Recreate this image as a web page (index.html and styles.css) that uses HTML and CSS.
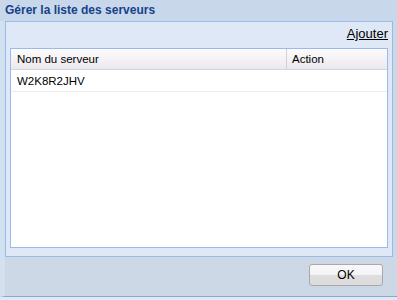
FILE: index.html
```html
<!DOCTYPE html>
<html lang="fr">
<head>
  <meta charset="UTF-8" />
  <title>Gérer la liste des serveurs</title>
  <link rel="stylesheet" href="styles.css">
</head>
<body>
  <div class="window">
    <div class="title">Gérer la liste des serveurs</div>

    <div class="panel">
      <div class="toolbar">
        <a href="#" class="add-link">Ajouter</a>
      </div>

      <div class="grid">
        <div class="grid-head">
          <div class="col-name">Nom du serveur</div>
          <div class="col-action">Action</div>
        </div>
        <div class="grid-row">
          <div class="col-name">W2K8R2JHV</div>
          <div class="col-action"></div>
        </div>
      </div>
    </div>

    <div class="footer">
      <button class="ok-btn">OK</button>
    </div>
  </div>
</body>
</html>
```

FILE: styles.css
```css
body {
  margin: 0;
  font-family: "Liberation Sans", Arial, sans-serif;
  font-size: 11.5px;
  color: #000;
  background: #dfe8f6;
}

.window {
  width: 397px;
  height: 297px;
  box-sizing: border-box;
  background: #cdd8e7;
  border-left: 5px solid #d3e0ef;
  border-bottom: 1px solid #8fa8c8;
  display: flex;
  flex-direction: column;
}

.title {
  height: 21px;
  line-height: 21px;
  margin-left: -5px;
  padding-left: 5px;
  background: #c8d8ea;
  color: #15428b;
  font-weight: bold;
  font-size: 12px;
}

.panel {
  width: 388px;
  height: 236px;
  box-sizing: border-box;
  border: 1px solid #99bbe8;
  background: #dfe8f6;
  padding: 0 4px 8px 4px;
  display: flex;
  flex-direction: column;
}

.toolbar {
  height: 26px;
  display: flex;
  justify-content: flex-end;
  align-items: flex-start;
}

.add-link {
  margin-top: 4px;
  font-size: 13px;
  color: #000;
  text-decoration: underline;
}

.grid {
  flex: 1;
  border: 1px solid #99bbe8;
  background: #fff;
}

.grid-head, .grid-row {
  display: flex;
}

.grid-head {
  height: 21px;
  line-height: 21px;
  background: linear-gradient(#fdfbfd, #ebe9ed);
  border-bottom: 1px solid #d6d6d6;
  box-sizing: border-box;
}

.grid-row {
  height: 22px;
  line-height: 23px;
  border-bottom: 1px solid #ededed;
  box-sizing: border-box;
}

.col-name {
  width: 275px;
  padding-left: 6px;
  box-sizing: border-box;
}

.grid-head .col-name {
  border-right: 1px solid #d2d2d2;
  width: 276px;
}

.col-action {
  flex: 1;
  padding-left: 5px;
}

.footer {
  flex: 1;
  display: flex;
  justify-content: flex-end;
  align-items: flex-start;
  padding: 7px 14px 0 0;
}

.ok-btn {
  width: 74px;
  height: 22px;
  border: 1px solid #a9a9a9;
  border-radius: 3px;
  background: linear-gradient(#f9f7f9 0%, #f4f2f4 50%, #dedede 51%, #dcdcdc 100%);
  font-family: "Liberation Sans", Arial, sans-serif;
  font-size: 12px;
  color: #000;
  padding: 0;
  cursor: pointer;
}
```
